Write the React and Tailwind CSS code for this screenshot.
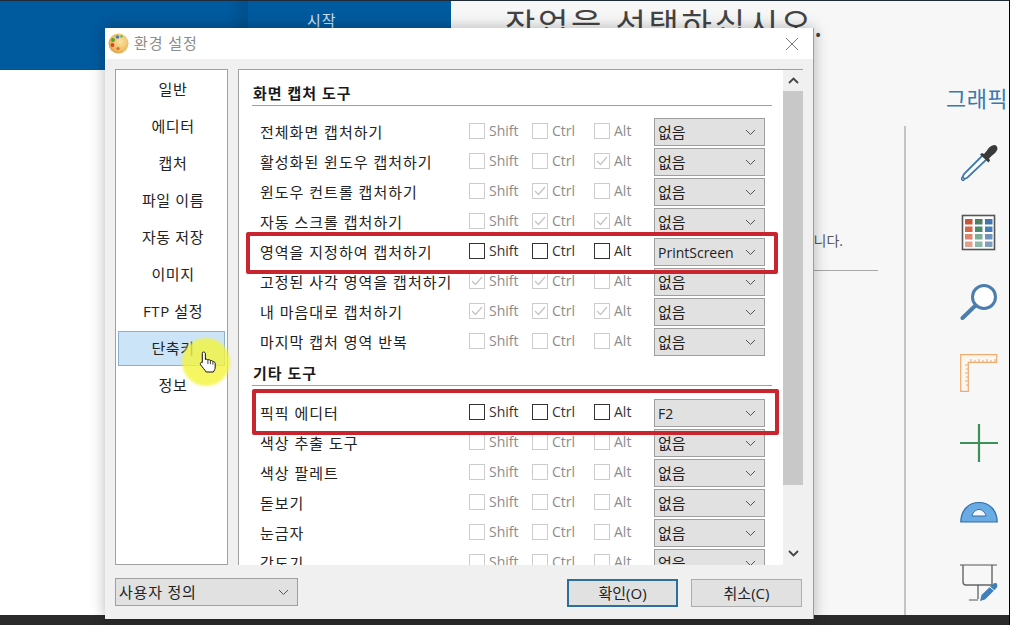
import React from "react";

const Chevron = ({ className = "", heavy = false }) => (
  <svg width="11" height="7" viewBox="0 0 11 7" className={className} fill="none" stroke={heavy ? "#444" : "#555"} strokeWidth={heavy ? 1.8 : 1}>
    <path d="M1 1l4.5 4.5L10 1" />
  </svg>
);

const Check = ({ on, enabled }) => (
  <span className={`w-[16px] h-[16px] border shrink-0 flex items-center justify-center bg-white ${enabled ? "border-[#333333]" : "border-[#cccccc]"}`}>
    {on ? (
      <svg width="12" height="10" viewBox="0 0 12 10" fill="none" stroke="#c4c4c4" strokeWidth="1.2">
        <path d="M1 5l3.5 3.5L11 1" />
      </svg>
    ) : null}
  </span>
);

const KeyCheck = ({ label, on, enabled, width }) => (
  <div className={`flex items-center gap-[4px] mb-[3px] shrink-0 ${width} ${enabled ? "text-[#333333]" : "text-[#8c8c8c]"}`}>
    <Check on={on} enabled={enabled} />
    <span className="text-[14px] leading-none">{label}</span>
  </div>
);

const Combo = ({ value, className = "", textClass = "text-[15px]" }) => (
  <div className={`h-[28px] border border-[#9f9f9f] bg-[#e1e1e1] flex items-center justify-between pl-[3px] pr-[8px] text-[#222222] ${textClass} ${className}`}>
    <span>{value}</span>
    <Chevron />
  </div>
);

const Row = ({ label, checks = [0, 0, 0], enabled, value = "없음" }) => (
  <div className="h-[30px] flex items-center pl-[8px] shrink-0">
    <div className="w-[209px] shrink-0 text-[15px] tracking-[1px] text-[#222222] whitespace-nowrap">{label}</div>
    <KeyCheck label="Shift" on={checks[0]} enabled={enabled} width="w-[63px]" />
    <KeyCheck label="Ctrl" on={checks[1]} enabled={enabled} width="w-[62px]" />
    <KeyCheck label="Alt" on={checks[2]} enabled={enabled} width="w-[60px]" />
    <Combo value={value} className="w-[111px] shrink-0" textClass={value === "없음" ? "text-[15px]" : "text-[14px]"} />
  </div>
);

const Heading = ({ children, className = "" }) => (
  <div className={`w-[520px] shrink-0 border-b border-[#a0a0a0] h-[24px] pl-px text-[15px] tracking-[1px] font-bold text-[#1a1a1a] leading-[23px] ${className}`}>
    {children}
  </div>
);

const navItems = ["일반", "에디터", "캡처", "파일 이름", "자동 저장", "이미지", "FTP 설정", "단축키", "정보"];

const Palette = () => (
  <svg width="21" height="21" viewBox="0 0 21 21">
    <defs>
      <radialGradient id="pal" cx="0.6" cy="0.4" r="0.7">
        <stop offset="0" stopColor="#fbe3a4" />
        <stop offset="0.7" stopColor="#edb95c" />
        <stop offset="1" stopColor="#c9913f" />
      </radialGradient>
    </defs>
    <circle cx="10.5" cy="10.5" r="10" fill="url(#pal)" />
    <circle cx="5" cy="7" r="2" fill="#5aa13a" />
    <circle cx="9.5" cy="4" r="1.8" fill="#3f7fc0" />
    <circle cx="4.5" cy="12" r="1.9" fill="#d8452e" />
    <circle cx="10" cy="15.5" r="1.6" fill="#e2673a" />
    <circle cx="13.5" cy="3.5" r="1.2" fill="#6bb04a" />
  </svg>
);

const Eyedropper = () => (
  <svg width="38" height="38" viewBox="0 0 38 38" fill="none">
    <path d="M23 11L4 30l-2 4 1.5 1.5 4-2L27 15z" fill="#fff" stroke="#3f7cae" strokeWidth="1.8" />
    <circle cx="3" cy="35" r="1.6" fill="#7fb0d6" stroke="#2d6da3" />
    <path d="M20 10.5l2-1.5 2 1 3-3.5C28 4 31 1.5 34 1c2.5 0 3.5 2 3.5 4-.5 2.5-3.5 5-5.5 6.5L29 14.5l1 2-1.5 2z" fill="#3a3a3a" />
  </svg>
);

const ColorTable = () => {
  const rows = [
    ["#c8553a", "#4e7f66", "#4274ad"],
    ["#d2674c", "#4f8a70", "#4a7db6"],
    ["#dc8670", "#7aae98", "#6f95bb"],
    ["#e49f8c", "#8db9a8", "#7f9fbf"],
  ];
  return (
    <svg width="38" height="38" viewBox="0 0 38 38">
      <rect x="2.500" y="1.500" width="32" height="34" fill="#fff" stroke="#555" strokeWidth="1.6" />
      {rows.map((r, i) =>
        r.map((c, j) => <rect key={`${i}-${j}`} x={5 + j * 10} y={5 + i * 7.5} width="7.5" height="5.5" fill={c} />)
      )}
    </svg>
  );
};

const Magnifier = () => (
  <svg width="38" height="38" viewBox="0 0 38 38" fill="none">
    <circle cx="24" cy="13" r="11.5" fill="#fff" stroke="#4a7eae" strokeWidth="3" />
    <path d="M15.500 21.500L2.500 34" stroke="#4a7eae" strokeWidth="4" strokeLinecap="round" />
  </svg>
);

const Ruler = () => (
  <svg width="38" height="38" viewBox="0 0 38 38" fill="none" stroke="#efab70" strokeWidth="1.2">
    <path d="M.7.7h36v7.600H8.300v29H.7z" fill="#fdf6ee" />
    <path d="M11 8v-3M15 8v-2M19 8v-3M23 8v-2M27 8v-3M31 8v-2M35 8v-3M8 11H5M8 15H6M8 19H5M8 23H6M8 27H5M8 31H6" stroke="#d9a67c" strokeWidth=".9" />
  </svg>
);

const Plus = () => (
  <svg width="38" height="38" viewBox="0 0 38 38" stroke="#3f8f58" strokeWidth="2.2">
    <path d="M19 0v38M0 19h38" />
  </svg>
);

const Protractor = () => (
  <svg width="38" height="38" viewBox="0 0 38 38">
    <path d="M.8 28C.8 16 9 8.500 19 8.500S37.200 16 37.200 28z" fill="#69abe2" stroke="#2f6ea8" strokeWidth="1.2" />
    <path d="M12 22c1-4 4-6.500 7-6.500s6 2.500 7 6.500z" fill="#f7f7f7" stroke="#2f6ea8" strokeWidth="1" />
  </svg>
);

const Projector = () => (
  <svg width="38" height="38" viewBox="0 0 38 38" fill="none">
    <path d="M0 1h37" stroke="#555" strokeWidth="1.2" />
    <path d="M3 1v17c0 2 1 3 3 3h26V1" stroke="#666" strokeWidth="1.4" />
    <path d="M18 21v14M9 36h9" stroke="#555" strokeWidth="1.2" />
    <path d="M20 37l1.500-6L33 20c1.500-1.500 3.500-1 4 0s.5 2.500-.5 4L25 35.500z" fill="#3f7fbc" />
    <path d="M30 23l4 3.500" stroke="#fff" strokeWidth="1" />
  </svg>
);

const Hand = () => (
  <svg width="18" height="23" viewBox="0 0 18 23" fill="#fff" stroke="#111" strokeWidth="1" strokeLinejoin="round">
    <path d="M4.500 1C5.600 1 6.400 1.800 6.400 2.800V8.600C7 8 8.300 8 8.900 8.900 9.600 8.400 11 8.600 11.400 9.600 12.100 9.200 13.500 9.500 13.900 10.600 14.700 10.400 16 11 16.200 12.200V16C16.200 18 15.300 19.500 14.300 21H7.200C6 19 3.200 16.200 1.500 13.500 .8 12.200 2.100 10.700 3.300 11.600V2.800C3 1.800 3.600 1 4.500 1z" />
    <path d="M8.900 9v4M11.400 9.700v3.500M13.900 10.700v3" fill="none" strokeWidth=".8" />
  </svg>
);

export default function App() {
  return (
    <div className="relative w-[1010px] h-[625px] overflow-hidden flex flex-col bg-[#f7f7f7] border-t border-r border-t-[#1c2b3a] border-r-black font-['Open_Sans','Noto_Sans_CJK_KR',sans-serif]">
      <div className="flex flex-1 min-h-0">
        {/* Background left */}
        <div className="w-[451px] shrink-0 flex flex-col bg-white">
          <div className="h-[69px] bg-[#005a9e] flex">
            <div className="w-[248px] bg-gradient-to-r from-[#005a9e] from-[92%] to-[#004f8b]" />
            <div className="flex-1 pl-[59px] pt-[8px] text-[15px] tracking-[1px] text-[#cfe0ee]">시작</div>
          </div>
        </div>
        {/* Background middle */}
        <div className="w-[453px] shrink-0 flex flex-col pl-[49px] text-[#444444]">
          <div className="h-[69px] pl-[5px] text-[33px] tracking-[2.7px] leading-[48px] whitespace-nowrap">작업을 선택하십시오.</div>
          <div className="mt-[160px] w-[378px] h-[41px] border-b border-[#a8a8a8] pr-[35px] text-right text-[14px] text-[#555555]">합니다.</div>
        </div>
        {/* Background right rail */}
        <div className="flex-1 flex flex-col">
          <div className="h-[125px] pl-[42px] pt-[82px] text-[22px] tracking-[0.4px] leading-[30px] text-[#3b78b0] whitespace-nowrap">그래픽</div>
          <div className="flex-1 border-l-2 border-[#c4c4c4] pl-[54px] pt-[18px] flex flex-col gap-[32px]">
            <Eyedropper />
            <ColorTable />
            <Magnifier />
            <Ruler />
            <Plus />
            <Protractor />
            <Projector />
          </div>
        </div>
      </div>
      <div className="h-[10px] shrink-0 bg-[#2b2b2b]" />

      {/* Dialog window */}
      <div className="absolute left-[105px] top-[27px] w-[709px] h-[591px] flex flex-col bg-[#f0f0f0] border-r border-[#9c9c9c] shadow-[0_0_14px_rgba(0,0,0,0.28)]">
        <div className="h-[31px] shrink-0 bg-white flex items-center pl-[3px] pr-[14px]">
          <Palette />
          <span className="ml-[5px] text-[15px] tracking-[0.9px] text-[#8c8c8c]">환경 설정</span>
          <svg width="14" height="14" viewBox="0 0 14 14" className="ml-auto" stroke="#777" strokeWidth="1" fill="none">
            <path d="M1 1l12 12M13 1L1 13" />
          </svg>
        </div>
        <div className="flex gap-[10px] px-[10px] pt-[10px]">
          <div className="w-[113px] h-[496px] shrink-0 bg-white border border-[#a0a0a0] pt-px px-[2px]">
            {navItems.map((n) => (
              <div key={n} className="h-[37px] py-px">
                <div
                  className={`h-[35px] pl-[3px] flex items-center justify-center text-[15px] tracking-[0.6px] text-[#222222] border ${
                    n === "단축키" ? "bg-[#cce4f7] border-[#8fb0cc]" : "border-transparent"
                  }`}
                >
                  {n}
                </div>
              </div>
            ))}
          </div>
          <div className="w-[565px] h-[496px] shrink-0 bg-white border-l border-t border-[#a0a0a0] flex overflow-hidden">
            <div className="w-[544px] pl-[13px] pt-[12px] flex flex-col shrink-0">
              <Heading>화면 캡처 도구</Heading>
              <div className="h-[11px] shrink-0" />
              <Row label="전체화면 캡처하기" />
              <Row label="활성화된 윈도우 캡처하기" checks={[0, 0, 1]} />
              <Row label="윈도우 컨트롤 캡처하기" checks={[0, 1, 0]} />
              <Row label="자동 스크롤 캡처하기" checks={[0, 1, 1]} />
              <Row label="영역을 지정하여 캡처하기" enabled value="PrintScreen" />
              <Row label="고정된 사각 영역을 캡처하기" checks={[1, 1, 0]} />
              <Row label="내 마음대로 캡처하기" checks={[1, 1, 1]} />
              <Row label="마지막 캡처 영역 반복" />
              <Heading className="mt-[5px]">기타 도구</Heading>
              <div className="h-[12px] shrink-0" />
              <Row label="픽픽 에디터" enabled value="F2" />
              <Row label="색상 추출 도구" />
              <Row label="색상 팔레트" />
              <Row label="돋보기" />
              <Row label="눈금자" />
              <Row label="각도기" />
            </div>
            <div className="w-[20px] shrink-0 flex flex-col bg-[#f0f0f0]">
              <div className="h-[21px] bg-[#f0f0f0] flex items-center justify-center">
                <Chevron heavy className="rotate-180" />
              </div>
              <div className="h-[394px] bg-[#c8c8c8]" />
              <div className="flex-1" />
              <div className="h-[24px] flex items-center justify-center">
                <Chevron heavy />
              </div>
            </div>
          </div>
        </div>
        <div className="flex items-start pl-[10px] pr-[11px] pt-[13px]">
          <Combo value="사용자 정의" className="w-[183px]" textClass="text-[15px] tracking-[0.8px]" />
          <button className="ml-auto mt-px w-[111px] h-[28px] border-2 border-[#2b6f9e] bg-[#e1e1e1] text-[15px] text-[#222222]">확인(O)</button>
          <button className="ml-[13px] mt-px w-[111px] h-[28px] border border-[#adadad] bg-[#e1e1e1] text-[15px] text-[#222222]">취소(C)</button>
        </div>
      </div>

      {/* Annotation overlays */}
      <div className="absolute left-[246px] top-[231px] w-[532px] h-[42px] border-[4px] border-[#c9252f] rounded-[2px]" />
      <div className="absolute left-[252px] top-[388px] w-[527px] h-[46px] border-[4px] border-[#c9252f] rounded-[2px]" />
      <div className="absolute left-[182px] top-[337px] w-[48px] h-[48px] rounded-full bg-[#f4f43c]/80 blur-[1px]" />
      <div className="absolute left-[199px] top-[350px]">
        <Hand />
      </div>
    </div>
  );
}
